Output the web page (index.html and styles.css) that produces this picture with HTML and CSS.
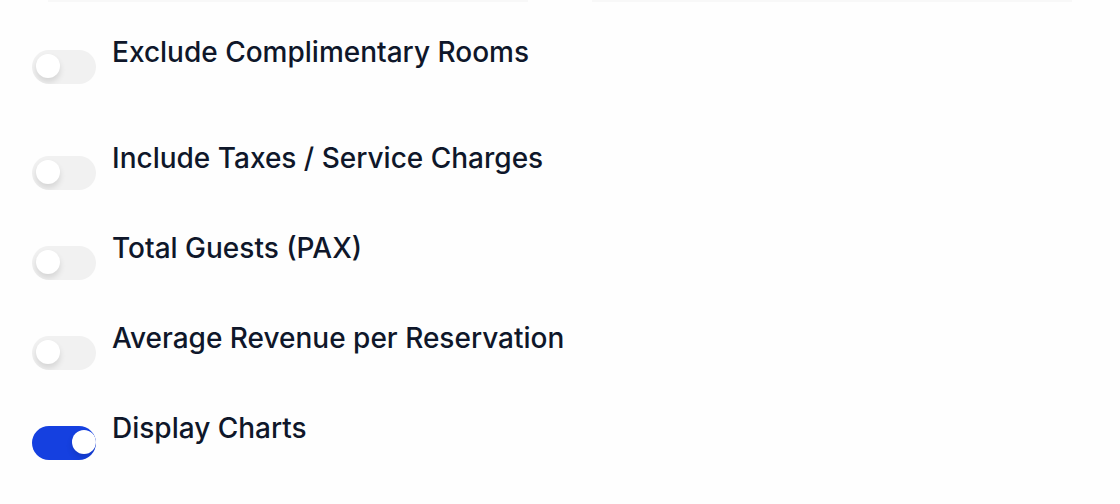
FILE: index.html
```html
<!DOCTYPE html>
<html lang="en">
<head>
<meta charset="utf-8">
<meta name="viewport" content="width=device-width, initial-scale=1">
<title>Report options</title>
<link rel="stylesheet" href="styles.css">
</head>
<body>
<form class="options">
  <div class="fields"><span class="field-edge"></span><span class="field-edge"></span></div>
  <div class="option option-spaced"><input class="switch" type="checkbox" role="switch" id="comp"><label for="comp">Exclude Complimentary Rooms</label></div>
  <div class="option"><input class="switch" type="checkbox" role="switch" id="tax"><label for="tax">Include Taxes / Service Charges</label></div>
  <div class="option"><input class="switch" type="checkbox" role="switch" id="pax"><label for="pax">Total Guests (PAX)</label></div>
  <div class="option"><input class="switch" type="checkbox" role="switch" id="avg"><label for="avg">Average Revenue per Reservation</label></div>
  <div class="option"><input class="switch" type="checkbox" role="switch" id="charts" checked><label for="charts">Display Charts</label></div>
</form>
</body>
</html>
```
FILE: styles.css
```css
* {
  box-sizing: border-box;
}

body {
  margin: 0;
  background: #fefefe;
  color: #0f172a;
  font-family: Inter, sans-serif;
}

.options {
  padding: 0 32px;
}

.fields {
  display: grid;
  grid-template-columns: 1fr 1fr;
  gap: 64px;
  padding: 0 16px;
  margin-bottom: 30px;
}

.field-edge {
  height: 2px;
  background: #f8f8f8;
}

.option {
  display: flex;
  align-items: flex-start;
  gap: 16px;
  min-height: 90px;
}

.option-spaced {
  min-height: 106px;
}

.option label {
  font-size: 28px;
  font-weight: 500;
  line-height: 40px;
}

.switch {
  appearance: none;
  display: flex;
  align-items: center;
  flex: none;
  width: 64px;
  height: 34px;
  margin: 18px 0 0;
  padding: 0 4px 2px;
  border-radius: 17px;
  background: #f1f1f1;
  overflow: hidden;
}

.switch::before {
  content: "";
  width: 24px;
  height: 24px;
  border-radius: 50%;
  background: #fff;
  box-shadow: 0 4px 6px rgb(0 0 0 / 12%);
}

.switch:checked {
  justify-content: flex-end;
  padding-right: 0;
  background: #1540e0;
}
```
